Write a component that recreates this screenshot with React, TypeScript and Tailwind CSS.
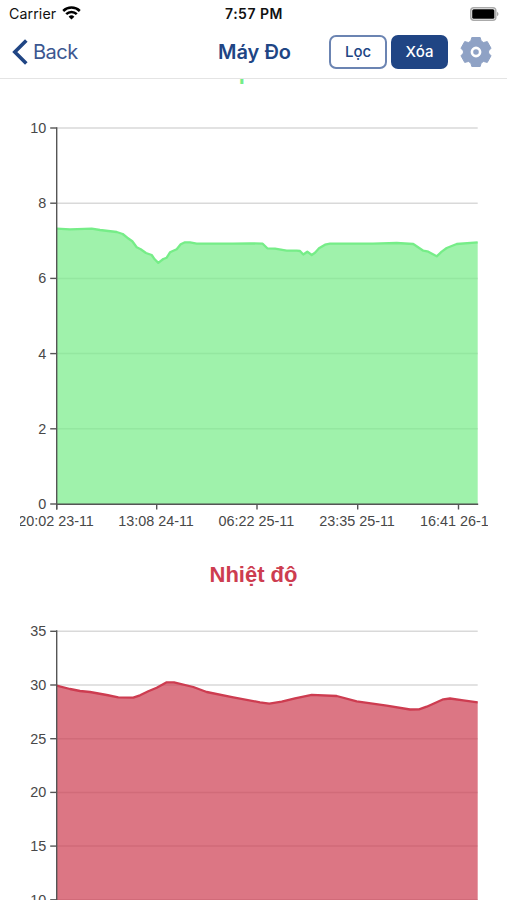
type Point = [number, number];

type ChartProps = {
  title: string;
  titleClass: string;
  color: string;
  top: number;
  ticks: { label: string; y: number }[];
  labels: { label: string; x: number }[];
  points: Point[];
};

const LEFT = 56.7;
const RIGHT = 477.7;
const HEIGHT = 376;

const phPoints: Point[] = [
  [56.7, 228.7], [70, 229.3], [91.7, 228.7], [100, 230], [108.3, 231], [116.7, 232], [122.7, 234],
  [127.3, 237.7], [132.3, 241.3], [136.7, 247.3], [140.7, 249.3], [146, 253], [151.7, 255], [154.7, 259.3],
  [158.3, 262.9], [163.3, 259], [166.7, 257.7], [170, 252.3], [176.7, 249.3], [180.7, 244.3], [185, 242.3],
  [190, 242.3], [196.7, 243.7], [233, 243.7], [250, 243.3], [262.7, 243.7], [267.3, 248.3], [275, 248.7],
  [286.7, 250.7], [296.7, 250.7], [300, 251], [303.3, 254.5], [307.3, 251.7], [311.7, 255], [315, 252.7],
  [319, 248.3], [325, 244.7], [330, 243.7], [373, 243.7], [396.7, 243], [413.3, 244], [423.3, 250.7],
  [428.3, 251.7], [436.7, 256.3], [441.7, 251.7], [446.7, 248], [456.7, 244], [477.7, 242.3],
];

const tempPoints: Point[] = [
  [56.7, 685.7], [70, 689], [80, 691], [90, 692], [106.7, 695], [118.3, 697.3], [133.3, 697.7],
  [140, 695.3], [148.3, 691.3], [156.7, 687.7], [166.7, 682.3], [174, 682.3], [193.3, 687], [206.7, 692],
  [233.3, 697.3], [260, 702.3], [269.3, 703.7], [281.7, 701.7], [295, 698.3], [311.7, 694.9], [336.7, 696],
  [356.7, 701.3], [386.7, 705.7], [410, 709.5], [419, 709.3], [426.7, 706.7], [443.3, 699.3], [450, 698.5],
  [463.3, 700.3], [477.7, 702.3],
];

const timeLabels = [
  { label: '20:02 23-11', x: 56.7 },
  { label: '13:08 24-11', x: 156.7 },
  { label: '06:22 25-11', x: 257 },
  { label: '23:35 25-11', x: 357.7 },
  { label: '16:41 26-11', x: 458.5 },
];

const phTicks = ['10', '8', '6', '4', '2', '0'].map((label, i) => ({ label, y: 128 + i * 75.2 }));
const tempTicks = ['35', '30', '25', '20', '15', '10', '5', '0'].map((label, i) => ({ label, y: 631.3 + i * 53.7 }));

const AreaChart = ({ title, titleClass, color, top, ticks, labels, points }: ChartProps) => {
  const line = 'M' + points.map(([x, y]) => `${x} ${y}`).join('L');
  const bottom = top + HEIGHT;

  return (
    <section className="h-[503px] px-5">
      <h2 className={`h-[30px] text-center text-[22px] leading-[30px] font-bold ${titleClass}`}>{title}</h2>
      <svg className="mt-[23px] block" width="468" height="430" viewBox={`20 ${top - 18} 468 430`}>
        {ticks.map((t) => (
          <line key={t.label} x1={LEFT} x2={RIGHT} y1={t.y} y2={t.y} stroke="#d9d9d9" strokeWidth="1.5" />
        ))}
        <path d={`${line}L${RIGHT} ${bottom}L${LEFT} ${bottom}Z`} fill={color} fillOpacity="0.7" />
        <path d={line} fill="none" stroke={color} strokeWidth="2.3" strokeLinejoin="round" />
        <g stroke="#555" strokeWidth="1.4">
          <line x1={LEFT} x2={LEFT} y1={top - 0.7} y2={bottom + 5.5} />
          <line x1={LEFT} x2={RIGHT + 0.5} y1={bottom + 0.3} y2={bottom + 0.3} />
          {ticks.map((t) => (
            <line key={t.label} x1={LEFT - 6.5} x2={LEFT} y1={t.y} y2={t.y} />
          ))}
          {labels.map((l) => (
            <line key={l.label} x1={l.x} x2={l.x} y1={bottom} y2={bottom + 5.5} />
          ))}
        </g>
        <g fill="#484848" fontSize="14.4">
          {ticks.map((t) => (
            <text key={t.label} x="46.3" y={t.y + 4.9} textAnchor="end">{t.label}</text>
          ))}
          {labels.map((l) => (
            <text key={l.label} x={l.x - 0.7} y={bottom + 22} textAnchor="middle">{l.label}</text>
          ))}
        </g>
      </svg>
    </section>
  );
};

const StatusBar = () => (
  <div className="grid h-[27px] grid-cols-3 items-center pr-2 pl-[9px] text-[#111]">
    <div className="flex items-center gap-[6px]">
      <span className="text-[14.2px] tracking-[0.1px]">Carrier</span>
      <svg width="19" height="14" viewBox="0 0 19 14" fill="none" stroke="#000" strokeWidth="2.5">
        <path d="M1.2 5a11.8 11.8 0 0 1 16.6 0" />
        <path d="M4.2 8.1a7.5 7.5 0 0 1 10.6 0" />
        <path d="M9.5 13.6 6.6 10.7a4.1 4.1 0 0 1 5.8 0Z" fill="#000" stroke="none" />
      </svg>
    </div>
    <span className="text-center text-[14px] leading-[20px] font-semibold tracking-[0.5px]">7:57 PM</span>
    <div className="flex justify-end">
      <svg width="29" height="14" viewBox="0 0 29 14">
        <rect x="0.8" y="0.8" width="25" height="12.4" rx="3" fill="#fff" stroke="#aaa" strokeWidth="1.5" />
        <rect x="2.2" y="2.2" width="22.2" height="9.6" rx="1.5" fill="#000" />
        <path d="M27 4.8v4.4c2-.8 2-3.6 0-4.4Z" fill="#aaa" />
      </svg>
    </div>
  </div>
);

const Header = () => (
  <header className="h-[79px] border-b border-[#e4e4e4] bg-white font-['Inter',sans-serif]">
    <StatusBar />
    <div className="flex h-[50px] items-center pr-[15px] pl-3 text-[#204584]">
      <button className="flex w-[206px] items-center gap-[5px] text-[20px] tracking-[-0.5px] text-[#3c5791]">
        <svg width="16" height="26" viewBox="0 0 16 26" fill="none" stroke="#204584" strokeWidth="3.6">
          <path d="M14.3 1.5 2.8 13 14.3 24.5" />
        </svg>
        Back
      </button>
      <h1 className="text-[20px] font-semibold">Máy Đo</h1>
      <div className="ml-auto flex items-center">
        <button className="h-[34px] w-[58px] rounded-[7px] border-2 border-[#6b84b2] text-[15px] font-medium tracking-[-0.1px]">Lọc</button>
        <button className="ml-1 h-[34px] w-[57px] rounded-[7px] bg-[#204584] text-[15px] font-medium text-white">Xóa</button>
        <svg className="ml-3" width="32" height="32" viewBox="0 0 32 32">
          <path
            d="M11.8 1.5h8.4l1 3.6 2.4 1.4 3.7-.9 3.7 6.6-2.4 2.700v2.200l2.400 2.700-3.700 6.600-3.700-.9-2.400 1.400-1 3.600h-8.400l-1-3.600-2.400-1.400-3.700.9L1 19.800l2.400-2.700v-2.200L1 12.200l3.700-6.600 3.700.9 2.400-1.400Z"
            fill="#8fa2c5"
            stroke="#8fa2c5"
            strokeLinejoin="round"
          />
          <circle cx="16" cy="16" r="4.1" fill="#8fa2c5" stroke="#fff" strokeWidth="2.6" />
        </svg>
      </div>
    </div>
  </header>
);

function App() {
  return (
    <div className="h-[900px] w-[507px] overflow-hidden bg-white font-['Liberation_Sans',sans-serif]">
      <Header />
      <main className="h-[821px] overflow-hidden">
        <div className="-mt-[22px]">
          <AreaChart title="pH" titleClass="text-[#74ed88]" color="#76ed88" top={128} ticks={phTicks} labels={timeLabels} points={phPoints} />
          <AreaChart title="Nhiệt độ" titleClass="text-[#cd3d50]" color="#cd3c50" top={631} ticks={tempTicks} labels={timeLabels} points={tempPoints} />
        </div>
      </main>
    </div>
  );
}

export default App;
